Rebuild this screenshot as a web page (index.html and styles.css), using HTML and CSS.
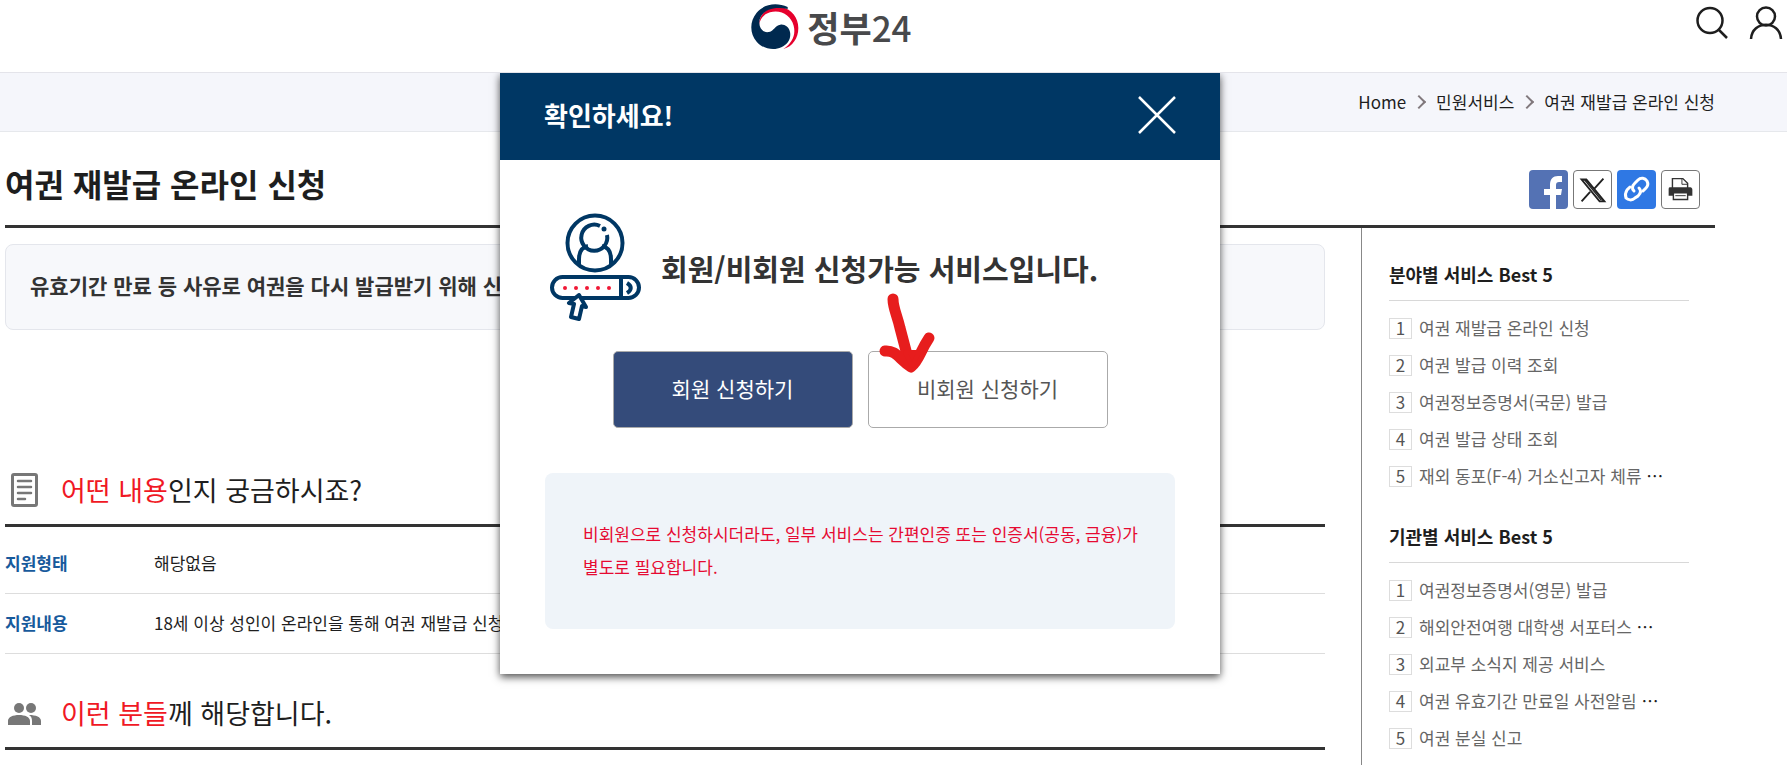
FILE: index.html
```html
<!DOCTYPE html>
<html lang="ko">
<head>
<meta charset="utf-8">
<meta name="viewport" content="width=device-width, initial-scale=1">
<title>여권 재발급 온라인 신청 | 정부24</title>
<link rel="stylesheet" href="styles.css">
</head>
<body>
<header class="header">
  <a class="logo" href="#">
    <svg class="logo-mark" viewBox="0 0 144 138" aria-hidden="true">
      <path fill="#e6002d" d="M24 62C25 24 57 5 92 10C122 15 142 43 142 72C142 102 125 128 97 135C124 117 135 92 128 65C120 35 91 16 57 25C40 30 29 42 24 62Z"/>
      <path fill="#00294f" d="M110 9C76-6 39 0 17 26C-5 52-4 90 17 113C36 135 68 141 91 130C110 121 121 104 117 84C114 69 101 60 88 62C72 64 70 80 54 84C38 87 26 76 25 58C23 27 57 4 110 15Z"/>
    </svg>
    <span class="logo-text">정부<span class="logo-number">24</span></span>
  </a>
  <div class="header-tools">
    <button class="tool" type="button" aria-label="검색">
      <svg viewBox="0 0 34 34"><circle cx="15" cy="14.500" r="12.500"/><path d="M24 24L32 32"/></svg>
    </button>
    <button class="tool" type="button" aria-label="로그인">
      <svg viewBox="0 0 34 34"><circle cx="17" cy="10.500" r="9"/><path d="M2 33C3 14 31 14 32 33"/></svg>
    </button>
  </div>
</header>

<nav class="location" aria-label="현재 위치">
  <ol class="crumbs">
    <li><a href="#">Home</a></li>
    <li><a href="#">민원서비스</a></li>
    <li><a href="#">여권 재발급 온라인 신청</a></li>
  </ol>
</nav>

<div class="page">
  <div class="title-row">
    <h1>여권 재발급 온라인 신청</h1>
    <div class="share">
      <button class="share-btn facebook" type="button" aria-label="페이스북">
        <svg viewBox="0 0 39 39"><path fill="#fff" d="M21 39V25H15V19H21V15C21 9 24 6 29 6H33V12H30C28 12 27 13 27 15V19H33L32 25H27V39Z"/></svg>
      </button>
      <button class="share-btn outlined" type="button" aria-label="X">
        <svg viewBox="0 0 39 39"><path fill="none" stroke="#222" stroke-width="2" d="M8 9H13L32 32H27ZM31 8L21 19M17 22L8 32"/><path fill="none" stroke="#222" stroke-width="1.500" d="M11 9L29 31"/></svg>
      </button>
      <button class="share-btn link" type="button" aria-label="링크 복사">
        <svg viewBox="0 0 39 39"><g fill="none" stroke="#fff" stroke-width="3" stroke-linecap="round"><path d="M17 21C14 18 16 15 18 13L21 10C24 7 28 8 30 11C31 13 31 16 29 18L26 21"/><path d="M22 18C25 21 23 24 21 26L18 28C15 31 11 30 9 28C8 25 8 23 10 20L13 17"/></g></svg>
      </button>
      <button class="share-btn outlined" type="button" aria-label="인쇄">
        <svg viewBox="0 0 39 39"><path fill="#333" d="M8 17H30C31 17 32 18 32 20V26H7V19Q7 17 8 17Z"/><path fill="#fff" stroke="#333" stroke-width="1.500" d="M11 18V8H22L27 13V18ZM12 23H27V30H12Z"/><path fill="none" stroke="#333" d="M21 8V14H27M14 26H25"/></svg>
      </button>
    </div>
  </div>

  <div class="columns">
    <main class="main">
      <p class="summary">유효기간 만료 등 사유로 여권을 다시 발급받기 위해 신청하는 민원입니다.</p>
      <section class="section">
        <h2 class="section-title">
          <svg class="section-icon" viewBox="0 0 36 36" aria-hidden="true"><rect x="7.500" y="2.500" width="24" height="31" rx="1.500" fill="none" stroke="#777" stroke-width="3"/><path fill="none" stroke="#777" stroke-width="2.500" stroke-linecap="round" d="M13 9H26M13 15H26M13 21H26M13 27H20"/></svg>
          <span><em>어떤 내용</em>인지 궁금하시죠?</span>
        </h2>
        <table class="info">
          <tbody>
            <tr><th scope="row">지원형태</th><td>해당없음</td></tr>
            <tr><th scope="row">지원내용</th><td>18세 이상 성인이 온라인을 통해 여권 재발급 신청을 할 수 있습니다.</td></tr>
          </tbody>
        </table>
      </section>
      <section class="section">
        <h2 class="section-title">
          <svg class="section-icon" viewBox="0 0 36 36" aria-hidden="true"><g fill="#777"><circle cx="14" cy="13" r="5"/><circle cx="26" cy="13" r="5"/><path d="M3 30V26C3 22 8 20 14 20C20 20 25 22 25 26V30ZM24 20C31 20 36 22 36 26V30H27V26C27 23 26 21 24 20Z"/></g></svg>
          <span><em>이런 분들</em>께 해당합니다.</span>
        </h2>
      </section>
    </main>

    <aside class="aside">
      <section class="best">
        <h3>분야별 서비스 Best 5</h3>
        <ol>
          <li><span class="rank">1</span><a href="#">여권 재발급 온라인 신청</a></li>
          <li><span class="rank">2</span><a href="#">여권 발급 이력 조회</a></li>
          <li><span class="rank">3</span><a href="#">여권정보증명서(국문) 발급</a></li>
          <li><span class="rank">4</span><a href="#">여권 발급 상태 조회</a></li>
          <li><span class="rank">5</span><a href="#">재외 동포(F-4) 거소신고자 체류 <span class="more">⋯</span></a></li>
        </ol>
      </section>
      <section class="best">
        <h3>기관별 서비스 Best 5</h3>
        <ol>
          <li><span class="rank">1</span><a href="#">여권정보증명서(영문) 발급</a></li>
          <li><span class="rank">2</span><a href="#">해외안전여행 대학생 서포터스 <span class="more">⋯</span></a></li>
          <li><span class="rank">3</span><a href="#">외교부 소식지 제공 서비스</a></li>
          <li><span class="rank">4</span><a href="#">여권 유효기간 만료일 사전알림 <span class="more">⋯</span></a></li>
          <li><span class="rank">5</span><a href="#">여권 분실 신고</a></li>
        </ol>
      </section>
    </aside>
  </div>
</div>

<div class="overlay">
  <section class="modal" role="dialog" aria-labelledby="modal-title">
    <header class="modal-head">
      <h2 id="modal-title">확인하세요!</h2>
      <button class="close" type="button" aria-label="닫기">
        <svg viewBox="0 0 38 38"><path d="M1 1L37 37M37 1L1 37"/></svg>
      </button>
    </header>
    <div class="modal-body">
      <div class="lead">
        <svg class="member-icon" viewBox="0 0 92 108" aria-hidden="true">
          <g fill="none" stroke="#003764" stroke-width="4">
            <circle cx="45" cy="30" r="27.500"/>
            <path d="M50 13A13 13 0 1 0 57 22"/>
            <path d="M29 52V46C29 38 33 34 38 33M52 33C57 34 61 38 61 46V52"/>
            <rect x="2" y="64" width="87" height="21" rx="10.500"/>
            <path d="M71 64V85"/>
            <path stroke-width="4" d="M77 70C82 73 82 77 77 80"/>
            <path fill="#fff" stroke-linejoin="round" d="M29 82L19 90L24 91L21 104L29 106L32 93L36 94Z"/>
          </g>
          <circle cx="54" cy="16" r="2.500" fill="#003764"/>
          <g fill="#f01836"><circle cx="15" cy="75" r="2"/><circle cx="26" cy="75" r="2"/><circle cx="37" cy="75" r="2"/><circle cx="48" cy="75" r="2"/><circle cx="59" cy="75" r="2"/></g>
        </svg>
        <p>회원/비회원 신청가능 서비스입니다.</p>
      </div>
      <div class="actions">
        <button class="btn primary" type="button">회원 신청하기</button>
        <button class="btn" type="button">비회원 신청하기</button>
      </div>
      <p class="notice">비회원으로 신청하시더라도, 일부 서비스는 간편인증 또는 인증서(공동, 금융)가 별도로 필요합니다.</p>
    </div>
    <svg class="pointer" viewBox="0 0 60 84" aria-hidden="true"><path d="M15 9C15 18 19 25 22 38L32 76M7 61C18 60 21 69 33 77C42 69 41 63 51 48"/><path d="M27 62L34 76L41 62Z"/></svg>
  </section>
</div>
</body>
</html>
```

FILE: styles.css
```css
* { box-sizing: border-box; }

body {
  margin: 0;
  min-height: 100vh;
  display: flex;
  flex-direction: column;
  position: relative;
  background: #fff;
  color: #1e1e1e;
  font-family: "Noto Sans CJK KR", sans-serif;
  font-size: 17px;
  line-height: 24px;
}

h1, h2, h3, p, ol { margin: 0; padding: 0; }
ol { list-style: none; }
a { color: inherit; text-decoration: none; }
button { font: inherit; color: inherit; padding: 0; border: 0; background: none; cursor: pointer; }
svg { display: block; }

.header {
  display: grid;
  grid-template-columns: 1fr auto 1.16fr;
  align-items: start;
  height: 73px;
  padding-right: 4px;
  border-bottom: 1px solid #e4e4ea;
}
.logo { grid-column: 2; display: flex; align-items: center; gap: 8px; padding-top: 4px; }
.logo-mark { width: 48px; height: 46px; }
.logo-text { color: #48494b; font-size: 35px; font-weight: 700; line-height: 46px; }
.logo-number { font-weight: 500; }
.header-tools { display: flex; justify-content: flex-end; gap: 20px; padding-top: 6px; }
.tool svg { width: 34px; height: 34px; fill: none; stroke: #1e1e1e; stroke-width: 2.5; }

.location {
  padding: 17px 72px 17px 5px;
  background: #f5f6fb;
  border-bottom: 1px solid #e6e8ec;
}
.crumbs { display: flex; justify-content: flex-end; }
.crumbs li { display: flex; align-items: center; }
.crumbs li + li::before {
  content: "";
  width: 8px;
  height: 8px;
  margin: 0 12px 0 8px;
  border: solid #80787c;
  border-width: 2px 2px 0 0;
  transform: rotate(45deg);
}

.page { flex: 1; display: flex; flex-direction: column; padding: 0 72px 0 5px; }
.title-row {
  display: flex;
  justify-content: space-between;
  align-items: flex-start;
  padding: 26px 15px 16px 0;
  border-bottom: 3px solid #333;
}
h1 { font-size: 32px; line-height: 50px; font-weight: 700; }
.share { display: flex; gap: 5px; padding-top: 12px; }
.share-btn { width: 39px; height: 39px; border-radius: 4px; overflow: hidden; }
.share-btn svg { width: 100%; height: 100%; }
.facebook { background: #5472b4; }
.link { background: #2f78e4; }
.outlined { border: 1px solid #777; }

.columns { flex: 1; display: flex; gap: 36px; }
.main { flex: 1; min-width: 0; padding-top: 16px; }
.summary {
  padding: 24px 24px 28px;
  border: 1px solid #e4e6ec;
  border-radius: 8px;
  background: #f7f8fb;
  color: #333;
  font-size: 21px;
  line-height: 32px;
  font-weight: 700;
}
.summary + .section { margin-top: 140px; }
.section + .section { margin-top: 39px; }
.section-title {
  display: flex;
  align-items: center;
  gap: 20px;
  padding-bottom: 14px;
  border-bottom: 3px solid #333;
  font-size: 27px;
  line-height: 40px;
  font-weight: 400;
}
.section-title em { color: #f01824; font-style: normal; }
.section-icon { width: 36px; height: 36px; }

.info { width: 100%; margin-top: 7px; border-collapse: collapse; }
.info th, .info td { padding: 17px 0 18px; border-bottom: 1px solid #ddd; text-align: left; }
.info th { width: 149px; color: #175a9c; font-weight: 700; }

.aside { width: 354px; padding: 32px 26px 16px 27px; border-left: 1px solid #888; }
.best + .best { margin-top: 27px; }
.best h3 { padding-bottom: 12px; border-bottom: 1px solid #d8d8d8; font-size: 18px; line-height: 28px; font-weight: 700; }
.best ol { padding-top: 9px; }
.best li { display: flex; align-items: center; gap: 7px; height: 37px; color: #666; }
.best a { padding-bottom: 2px; }
.rank { width: 23px; height: 21px; border: 1px solid #ddd; color: #555; line-height: 18px; text-align: center; }
.more { color: #1e1e1e; }

.overlay { position: absolute; top: 73px; left: 5px; right: 72px; display: flex; justify-content: center; }
.modal { position: relative; width: 720px; background: #fff; box-shadow: 0 3px 8px rgba(0, 0, 0, 0.7); clip-path: inset(0 -16px -20px); }
.modal-head {
  display: flex;
  justify-content: space-between;
  align-items: center;
  height: 87px;
  padding: 0 44px 4px;
  background: #003764;
  color: #fff;
}
.modal-head h2 { font-size: 26px; line-height: 40px; font-weight: 700; }
.close svg { width: 38px; height: 38px; fill: none; stroke: #fff; stroke-width: 2.5; }
.modal-body { padding: 53px 45px 45px; }
.lead { display: flex; align-items: center; gap: 19px; padding-left: 5px; color: #333; font-size: 29px; line-height: 44px; font-weight: 700; }
.lead p { padding-top: 2px; }
.member-icon { width: 92px; height: 108px; }
.actions { display: flex; justify-content: center; gap: 15px; margin-top: 30px; }
.btn { width: 240px; height: 77px; padding-bottom: 4px; border: 1px solid #aaa; border-radius: 5px; color: #555; font-size: 21px; line-height: 32px; }
.primary { background: #344b7a; color: #fff; }
.notice { margin-top: 45px; padding: 44px 30px 46px 38px; border-radius: 8px; background: #eff4f9; color: #e60a32; line-height: 33px; word-break: keep-all; }
.pointer { position: absolute; left: 378px; top: 217px; width: 60px; height: 84px; fill: #e71d1d; stroke: #e71d1d; stroke-width: 11; stroke-linecap: round; stroke-linejoin: round; }
.pointer path:first-child { fill: none; }
.pointer path:last-child { stroke-width: 4; }
```
